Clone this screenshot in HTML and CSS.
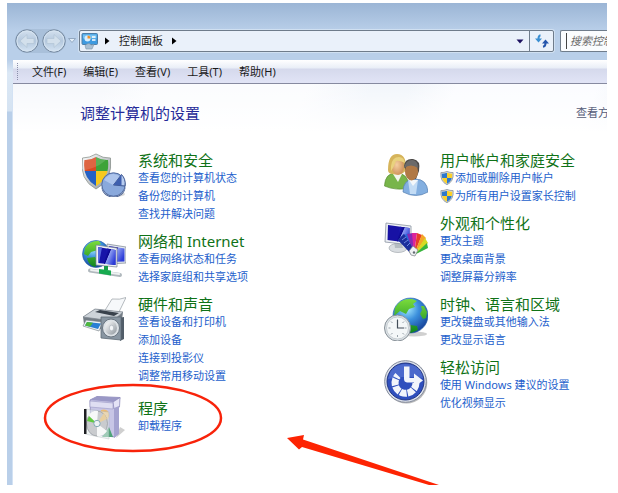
FILE: index.html
```
<!DOCTYPE html>
<html lang="zh-CN">
<head>
    <meta charset="UTF-8">
    <meta name="viewport" content="width=device-width, initial-scale=1.0">
    <title>控制面板</title>
    <link rel="stylesheet" href="styles.css">
</head>
<body>
    <!-- Shared gradients and the small shield -->
    <svg class="defs" width="0" height="0" aria-hidden="true">
        <defs>
            <linearGradient id="screen" x1="0" y1="0" x2="1" y2="0.6">
                <stop offset="0" stop-color="#2a2ad0"/>
                <stop offset="0.45" stop-color="#0c0690"/>
                <stop offset="0.5" stop-color="#8c9cf0"/>
                <stop offset="1" stop-color="#2c3cd8"/>
            </linearGradient>
            <radialGradient id="ocean" cx="0.4" cy="0.3" r="0.75">
                <stop offset="0" stop-color="#a8ecff"/>
                <stop offset="0.45" stop-color="#3b8fdc"/>
                <stop offset="1" stop-color="#123c94"/>
            </radialGradient>
            <linearGradient id="land" x1="0" y1="0" x2="0" y2="1">
                <stop offset="0" stop-color="#7bdc3c"/>
                <stop offset="1" stop-color="#0e8420"/>
            </linearGradient>
            <linearGradient id="metal" x1="0" y1="0" x2="1" y2="1">
                <stop offset="0" stop-color="#ffffff"/>
                <stop offset="1" stop-color="#8d959c"/>
            </linearGradient>
            <linearGradient id="glass" x1="0" y1="0" x2="0" y2="1">
                <stop offset="0" stop-color="#d5e2ef"/>
                <stop offset="0.5" stop-color="#b4c8de"/>
                <stop offset="1" stop-color="#d6e5f4"/>
            </linearGradient>
            <radialGradient id="skin" cx="0.4" cy="0.4" r="0.7">
                <stop offset="0" stop-color="#f5cfa2"/>
                <stop offset="1" stop-color="#c98a52"/>
            </radialGradient>
            <clipPath id="shield-clip">
                <path d="M8 2Q11 3 14 3Q14.500 11 8 14.500Q1.500 11 2 3Q5 3 8 2Z"/>
            </clipPath>
            <symbol id="uac-shield" viewBox="0 0 16 16">
                <path d="M8 0.500Q11.500 2 15 1.800Q16 12 8 15.700Q0 12 1 1.800Q4.500 2 8 0.500Z" fill="#d4d8dc" stroke="#7e868e" stroke-width="0.800"/>
                <g clip-path="url(#shield-clip)">
                    <path fill="#2d78cc" d="M0 0h8v8H0zM8 8h8v8H8z"/>
                    <path fill="#fbd029" d="M8 0h8v8H8zM0 8h8v8H0z"/>
                </g>
            </symbol>
        </defs>
    </svg>

    <div class="window">
        <header class="address-row">
            <div class="nav-buttons">
                <button type="button" class="nav-button" aria-label="后退">
                    <svg width="24" height="24" viewBox="0 0 24 24">
                        <circle cx="12" cy="12" r="11.200" fill="url(#glass)" stroke="#73879e"/>
                        <circle cx="12" cy="12" r="10" fill="none" stroke="#d6e4f1"/>
                        <path d="M5 12L12 5.500V9.500H19V14.500H12V18.500Z" fill="#d3e0ec" stroke="#b2c4d6" stroke-width="0.700"/>
                    </svg>
                </button>
                <button type="button" class="nav-button" aria-label="前进">
                    <svg width="24" height="24" viewBox="0 0 24 24">
                        <circle cx="12" cy="12" r="11.200" fill="url(#glass)" stroke="#73879e"/>
                        <circle cx="12" cy="12" r="10" fill="none" stroke="#d6e4f1"/>
                        <path d="M19 12L12 5.500V9.500H5V14.500H12V18.500Z" fill="#d3e0ec" stroke="#b2c4d6" stroke-width="0.700"/>
                    </svg>
                </button>
            </div>
            <button type="button" class="history-button" aria-label="最近的页面">
                <svg width="8" height="6" viewBox="0 0 8 6"><path d="M0.500 0.500H7.500L4 4.500Z" fill="#e3eef8" stroke="#93a9c2"/></svg>
            </button>

            <div class="address-bar">
                <svg class="address-icon" width="18" height="18" viewBox="0 0 18 18">
                    <rect x="1" y="1.500" width="15.500" height="11" rx="1" fill="#3d9ae0" stroke="#4c7ea8"/>
                    <rect x="2" y="2.500" width="13.500" height="4" fill="#73c0f2"/>
                    <circle cx="6.500" cy="6.500" r="3" fill="#d7efff"/>
                    <path d="M6.500 6.500V3.500A3 3 0 0 1 9.500 6.500Z" fill="#f0922c"/>
                    <path d="M11 5h3.500M11 8h3.500" stroke="#fff" stroke-width="1.300"/>
                    <path d="M4 13.500Q8 10 10 13L13 12.500L11 17H5Z" fill="#a9bfd2" stroke="#7a93aa" stroke-width="0.600"/>
                </svg>
                <button type="button" class="crumb-arrow" aria-label="展开">
                    <svg width="5" height="8" viewBox="0 0 5 8"><path d="M0 0.500L4.500 4L0 7.500Z"/></svg>
                </button>
                <button type="button" class="crumb">控制面板</button>
                <button type="button" class="crumb-arrow" aria-label="展开控制面板">
                    <svg width="5" height="8" viewBox="0 0 5 8"><path d="M0 0.500L4.500 4L0 7.500Z"/></svg>
                </button>
                <button type="button" class="address-drop" aria-label="以前的位置">
                    <svg width="8" height="5" viewBox="0 0 8 5"><path d="M0.500 0.500H7.500L4 4.500Z" fill="#1d1260"/></svg>
                </button>
                <button type="button" class="refresh" aria-label="刷新">
                    <svg width="14" height="14" viewBox="0 0 14 14">
                        <path d="M5.500 1.200Q3.500 1.500 3.500 5" fill="none" stroke="#3a8fd2" stroke-width="2"/>
                        <path d="M0 4.500H7L3.500 8.500Z" fill="#3a8fd2"/>
                        <path d="M8 12.800Q10.500 12.500 10.500 9" fill="none" stroke="#2455ac" stroke-width="2"/>
                        <path d="M7 9.500H14L10.500 5.500Z" fill="#2455ac"/>
                    </svg>
                </button>
            </div>

            <div class="search">
                <input type="search" class="search-input" placeholder="搜索控制面板" aria-label="搜索控制面板">
            </div>
        </header>

        <nav class="menu-bar">
            <button type="button">文件(F)</button>
            <button type="button">编辑(E)</button>
            <button type="button">查看(V)</button>
            <button type="button">工具(T)</button>
            <button type="button">帮助(H)</button>
        </nav>

        <main class="content">
            <div class="content-header">
                <h1>调整计算机的设置</h1>
                <span class="view-by">查看方式：</span>
            </div>

            <div class="categories">
                <div class="column">
                    <section class="category">
                        <svg class="category-icon" viewBox="0 0 44 44">
                            <clipPath id="big-shield"><path d="M14 4Q20 7.500 26 7Q28 25 14 33Q0 25 2.500 7Q8.500 7.500 14 4Z"/></clipPath>
                            <path d="M14 1Q21 5.500 28.500 5Q31 27 14 36Q-3 27 0.500 5Q7.500 5 14 1Z" fill="url(#metal)" stroke="#8d948f" stroke-width="0.800"/>
                            <g clip-path="url(#big-shield)">
                                <path fill="#d94a22" d="M0 0h14v18H0z"/>
                                <path fill="#3da338" d="M14 0h16v18H14z"/>
                                <path fill="#2461c4" d="M0 18h14v18H0z"/>
                                <path fill="#f6c91e" d="M14 18h16v18H14z"/>
                                <path fill="#fff" opacity="0.150" d="M0 0h28Q24 13 0 18z"/>
                            </g>
                            <ellipse cx="33" cy="41" rx="10" ry="3" fill="#999" opacity="0.400"/>
                            <path d="M19.500 32a12 11.500 0 0 0 24 0v2a12 10.500 0 0 1-24 0z" fill="#455f94"/>
                            <circle cx="31.500" cy="31.500" r="11.700" fill="#8aa9dc" stroke="#526b9f"/>
                            <path d="M22 27Q29 17 39 24L31 32Z" fill="#bdd2f2" opacity="0.700"/>
                            <path d="M31.500 32L39.500 21.500Q44 26 43 33Z" fill="#b8cdf0" stroke="#40588f"/>
                            <path d="M31.500 32L39.500 21.500V32.500Z" fill="#3e5fae"/>
                        </svg>
                        <div class="category-text">
                            <h2><a href="#">系统和安全</a></h2>
                            <ul>
                                <li><a href="#">查看您的计算机状态</a></li>
                                <li><a href="#">备份您的计算机</a></li>
                                <li><a href="#">查找并解决问题</a></li>
                            </ul>
                        </div>
                    </section>

                    <section class="category">
                        <svg class="category-icon" viewBox="0 0 44 44">
                            <circle cx="14" cy="20" r="13.500" fill="url(#ocean)" stroke="#2561a4" stroke-width="0.600"/>
                            <path d="M3 14Q8 6 17 7L19 10L14 12L16 16L9 18L6 22L2 20ZM5 24L13 23L17 28L13 33Q6 31 5 24Z" fill="url(#land)"/>
                            <path d="M25 10L44 13V29L26 30Z" fill="#e3e8ed" stroke="#78838f" stroke-width="0.700"/>
                            <path d="M27 12L42.500 14.500V27.500L27 28Z" fill="url(#screen)"/>
                            <path d="M14 11L35 14V33L14 31Z" fill="#eef1f4" stroke="#78838f" stroke-width="0.700"/>
                            <path d="M16 13L33.500 16V31L16 29Z" fill="#1714a8"/>
                            <path d="M25 14.500L33.500 16V31L22 29.800Z" fill="url(#screen)"/>
                            <path d="M16 13L20 13.500L17 29H16Z" fill="#5668dc"/>
                            <path d="M22 32h4v4h-4z" fill="#199c48"/>
                            <path d="M8 36.500L38 41" stroke="#b0b8bd" stroke-width="4" stroke-linecap="round"/>
                            <path d="M9 36L37 40" stroke="#edf1f1" stroke-width="2" stroke-linecap="round"/>
                            <path d="M17 35L29 36.500V41.500L17 39.500Z" fill="#18aa50"/>
                        </svg>
                        <div class="category-text">
                            <h2><a href="#">网络和 Internet</a></h2>
                            <ul>
                                <li><a href="#">查看网络状态和任务</a></li>
                                <li><a href="#">选择家庭组和共享选项</a></li>
                            </ul>
                        </div>
                    </section>

                    <section class="category">
                        <svg class="category-icon" viewBox="0 0 44 44">
                            <path d="M22 15L30 2Q38 3 44 0.500L36 17Z" fill="#f6f8fa" stroke="#a3a9af" stroke-width="0.800"/>
                            <path d="M1 20L13 12L41 15L39 30L25 34L2 27Z" fill="#747d86"/>
                            <path d="M1 20L13 12L41 15L31 24Z" fill="#cdd3d9" stroke="#7c858e" stroke-width="0.700"/>
                            <path d="M13 15L18 13L37 16L32 19Z" fill="#39424c"/>
                            <path d="M4 23L21 25L17 34L1 29Z" fill="#eef2f5" stroke="#717a82" stroke-width="0.600"/>
                            <path d="M5 25L19 26.500L16 32L3 28.500Z" fill="#2a7fd4"/>
                            <path d="M5 25L11 25.700L8 29.700L3 28.500Z" fill="#51b93a"/>
                            <path d="M36 21L42 20V42L38 44Z" fill="#515d69"/>
                            <path d="M19 20H39V43L19 41Z" fill="#8996a2" stroke="#5d6974" stroke-width="0.800"/>
                            <ellipse cx="29" cy="31" rx="8.500" ry="9" fill="#dce1e5" stroke="#6b7681"/>
                            <ellipse cx="29" cy="31" rx="6" ry="6.800" fill="url(#metal)"/>
                            <ellipse cx="29.500" cy="31" rx="2.200" ry="2.800" fill="#f4f6f8" stroke="#a5adb4" stroke-width="0.600"/>
                        </svg>
                        <div class="category-text">
                            <h2><a href="#">硬件和声音</a></h2>
                            <ul>
                                <li><a href="#">查看设备和打印机</a></li>
                                <li><a href="#">添加设备</a></li>
                                <li><a href="#">连接到投影仪</a></li>
                                <li><a href="#">调整常用移动设置</a></li>
                            </ul>
                        </div>
                    </section>

                    <section class="category marked">
                        <svg class="category-icon" viewBox="0 0 44 44">
                            <path d="M34 42L43 34L38 31Z" fill="#888" opacity="0.400"/>
                            <path d="M8 4L15 0.500L38 1.500L36 9L33 41L9 38Z" fill="#c8c6e6" stroke="#8582b4" stroke-width="0.800"/>
                            <path d="M8 4L31 6L38 1.500L15 0.500Z" fill="#9a98c6"/>
                            <path d="M31 6L38 1.500L37.500 11L32 13Z" fill="#e4e3f6" stroke="#8582b4" stroke-width="0.700"/>
                            <path d="M32 12L37 10V38L32 42Z" fill="#a5a3d0"/>
                            <path d="M8 5L31 7V13L8 11Z" fill="#dfdef2" stroke="#9a98c4" stroke-width="0.600"/>
                            <path d="M19 14Q27 12 27 20L25 25L19 22Z" fill="#f0bd72"/>
                            <path d="M20 41L27 31L31 41Z" fill="#4da477"/>
                            <path d="M3 13L27 16V43L3 38Z" fill="#e2ecec" opacity="0.550" stroke="#a0a8ac" stroke-width="0.600"/>
                            <ellipse cx="15" cy="27.500" rx="10.500" ry="12.500" fill="#c9cbce" stroke="#95999d" stroke-width="0.700"/>
                            <path d="M15 27.500L6 20Q10 14 16 15ZM15 27.500L25 35Q21 41 15 40Z" fill="#f7f8f8"/>
                            <path d="M15 27.500L5 25L7 20Z" fill="#62ca42"/>
                            <path d="M15 27.500L22 17L25 23Z" fill="#e8cfa0"/>
                            <circle cx="15" cy="27.500" r="3.200" fill="#eef2f4" stroke="#83a9b4"/>
                            <path d="M2 13H4.500V38H2Z" fill="#1e1f22"/>
                        </svg>
                        <div class="category-text">
                            <h2><a href="#">程序</a></h2>
                            <ul>
                                <li><a href="#">卸载程序</a></li>
                            </ul>
                        </div>
                        <svg class="mark-ellipse" width="180" height="70" viewBox="0 0 180 70" aria-hidden="true">
                            <ellipse cx="90" cy="35" rx="88" ry="33" fill="none" stroke="#f8230a" stroke-width="2.500"/>
                        </svg>
                    </section>
                </div>

                <div class="column">
                    <section class="category">
                        <svg class="category-icon" viewBox="0 0 44 44">
                            <path d="M0.500 33Q1 20 12 20Q25 20 25 35Q12 38 0.500 33Z" fill="#78b54a" stroke="#5b8f38" stroke-width="0.700"/>
                            <path d="M9 21L14 29L18 21Z" fill="#f2f5ec"/>
                            <path d="M4 17Q4 1 13 1Q23 1 22 17Q18 23 9 21Q4 21 4 17Z" fill="#d6b45b"/>
                            <ellipse cx="14" cy="13.500" rx="6" ry="8.500" fill="url(#skin)"/>
                            <path d="M7 13Q8 4 15 4Q20 4 21 10Q15 7 12 8Q10 14 7 18Z" fill="#e9d27e"/>
                            <path d="M19 39Q19 26 31 26Q43 26 44 39Q32 46 19 39Z" fill="#83afe0" stroke="#577fb0" stroke-width="0.700"/>
                            <path d="M24 27Q28 29 34 27L32 41H26Z" fill="#c3dcf5"/>
                            <path d="M25 27L29 33L34 27Z" fill="#f4f7fa"/>
                            <path d="M20 13Q21 5 29 6Q37 7 35 18L32 26H25Z" fill="#4d4a48"/>
                            <ellipse cx="27.500" cy="18.500" rx="6.500" ry="9" fill="#b07946"/>
                            <path d="M20 15Q22 6 29 7Q34 8 34 15Q27 10 20 15Z" fill="#6b6a6a"/>
                        </svg>
                        <div class="category-text">
                            <h2><a href="#">用户帐户和家庭安全</a></h2>
                            <ul>
                                <li><a href="#"><svg class="shield"><use href="#uac-shield"/></svg>添加或删除用户帐户</a></li>
                                <li><a href="#"><svg class="shield"><use href="#uac-shield"/></svg>为所有用户设置家长控制</a></li>
                            </ul>
                        </div>
                    </section>

                    <section class="category">
                        <svg class="category-icon" viewBox="0 0 44 44">
                            <ellipse cx="14" cy="32" rx="9" ry="4.500" fill="#d9dde1" stroke="#a3a9af" stroke-width="0.700"/>
                            <path d="M10 25H17L19 32H11Z" fill="#b5bcc2"/>
                            <path d="M2 7L27 10V29L1 26Z" fill="#edf0f4" stroke="#8992a0" stroke-width="0.800"/>
                            <path d="M4 9L25.500 12V27L3.500 24Z" fill="#1711a4"/>
                            <path d="M16 10.700L25.500 12V27L13 25.300Z" fill="url(#screen)"/>
                            <path d="M30 39L14 24L20 18Z" fill="#223ca8"/>
                            <path d="M30 39L18 20L25 17Z" fill="#2a68d8"/>
                            <path d="M30 39L23 18L29 17Z" fill="#8828b4"/>
                            <path d="M30 39L28 17L33 17Z" fill="#dc2499"/>
                            <path d="M30 39L33 17L38 19Z" fill="#e83c2c"/>
                            <path d="M30 39L38 18L42 22Z" fill="#f3a528"/>
                            <path d="M30 39L41 22L44 27Z" fill="#d5da24"/>
                            <path d="M30 39L43 27L44 32Z" fill="#38b53c"/>
                            <path d="M14 24L20 18L27 29L31 38L28 39Z" fill="#1b2e9c"/>
                            <path d="M18 24L22 21M20 27L24 24M23 30L26 27" stroke="#6f8ae0"/>
                            <path d="M25 35L29 30L34 34L31 40L27 39Z" fill="#f0f2f4" stroke="#7a8087" stroke-width="0.700"/>
                            <circle cx="30" cy="36.500" r="1.200" fill="#646b72"/>
                        </svg>
                        <div class="category-text">
                            <h2><a href="#">外观和个性化</a></h2>
                            <ul>
                                <li><a href="#">更改主题</a></li>
                                <li><a href="#">更改桌面背景</a></li>
                                <li><a href="#">调整屏幕分辨率</a></li>
                            </ul>
                        </div>
                    </section>

                    <section class="category">
                        <svg class="category-icon" viewBox="0 0 44 44">
                            <ellipse cx="30" cy="37" rx="13" ry="2.500" fill="#777" opacity="0.350"/>
                            <circle cx="26.500" cy="18.500" r="17.500" fill="url(#ocean)" stroke="#2a62a6" stroke-width="0.600"/>
                            <path d="M11 11Q16 1 28 2L33 4L29 7L31 10L25 12L22 17L16 14L10 19ZM37 9L40 9L43 15L42 21L39 22L36 17L38 13ZM26 28L33 29L34 33L27 36L23 33Z" fill="url(#land)"/>
                            <circle cx="13.500" cy="31" r="13" fill="#dce2e6" stroke="#889198"/>
                            <circle cx="13.500" cy="31" r="11" fill="#f4f7f8" stroke="#bcc4c9" stroke-width="0.800"/>
                            <path d="M13.500 22v2M13.500 38v2M4.500 31h2M20.500 31h2M7 24.500l1.500 1.500M20 24.500l-1.500 1.500M7 37.500l1.500-1.500M20 37.500l-1.500-1.500" stroke="#97a1a9"/>
                            <path d="M13.500 23V31H20" fill="none" stroke="#424d58" stroke-width="1.200"/>
                        </svg>
                        <div class="category-text">
                            <h2><a href="#">时钟、语言和区域</a></h2>
                            <ul>
                                <li><a href="#">更改键盘或其他输入法</a></li>
                                <li><a href="#">更改显示语言</a></li>
                            </ul>
                        </div>
                    </section>

                    <section class="category">
                        <svg class="category-icon" viewBox="0 0 44 44">
                            <circle cx="22.500" cy="22.800" r="20.800" fill="#777" opacity="0.500"/>
                            <circle cx="21.500" cy="21.500" r="20.800" fill="#dce1ea" stroke="#848b9c"/>
                            <circle cx="21.500" cy="21.500" r="18.500" fill="#2f4fbd" stroke="#203482"/>
                            <path d="M4 19Q7 4 22 4Q37 5 39 18Q23 15 4 19Z" fill="#7690e4" opacity="0.400"/>
                            <path d="M32 23A10.500 10.500 0 1 1 14 15.500" fill="none" stroke="#f2f5fb" stroke-width="7" stroke-dasharray="6.500 1"/>
                            <path d="M20 6.500H25.500V18H30V13.500L39 20.500L30 27V22.500H23Q20 22 20 19Z" fill="#f2f5fb"/>
                        </svg>
                        <div class="category-text">
                            <h2><a href="#">轻松访问</a></h2>
                            <ul>
                                <li><a href="#">使用 Windows 建议的设置</a></li>
                                <li><a href="#">优化视频显示</a></li>
                            </ul>
                        </div>
                    </section>
                </div>
            </div>

            <svg class="mark-arrow" width="156" height="50" viewBox="0 0 156 50" aria-hidden="true">
                <path d="M0 3L17 0L16 4.500L152 50H142L15 12L12 14.500Z" fill="#fd2403"/>
            </svg>
        </main>
    </div>
</body>
</html>
```
FILE: styles.css
```
* {
    box-sizing: border-box;
}

body {
    display: flex;
    min-height: 100vh;
    margin: 0;
    padding: 3px 11px 8px 7px;
    background-color: #fff;
    color: #1a1a1a;
    font-family: "Noto Sans", "Noto Sans CJK SC", sans-serif;
    font-size: 11px;
    line-height: 18px;
}

button {
    padding: 0;
    border: none;
    background: none;
    color: inherit;
    font: inherit;
    cursor: pointer;
}

svg {
    display: block;
}

h1,
h2,
ul {
    margin: 0;
    padding: 0;
    font-weight: normal;
    list-style: none;
}

a {
    color: inherit;
    text-decoration: none;
}

a:hover {
    text-decoration: underline;
}

.defs {
    position: absolute;
}

.window {
    display: flex;
    flex: 1;
    flex-direction: column;
    min-width: 0;
    overflow: hidden;
    background: linear-gradient(#9bb5d5, #b9cfe9 28px, #b9cfe9 57px, #dce8f5 70px, #d5e3f2 108px, #b9cfe9 109px);
}

/* Address row */
.address-row {
    display: flex;
    align-items: center;
    padding: 26px 0 7px 8px;
}

.nav-buttons {
    display: flex;
    gap: 3px;
    border-radius: 12px;
    background-color: #a9c0da;
}

.history-button {
    width: 8px;
    margin: 0 3px 0 2px;
}

.address-bar {
    display: flex;
    flex: 1;
    align-items: center;
    height: 22px;
    min-width: 0;
    border: 1px solid #6f7c8b;
    border-radius: 2px;
    background-color: #eaf1fa;
    box-shadow: 0 0 0 1px #d0e0f1;
}

.address-icon {
    margin-left: 1px;
}

.crumb-arrow {
    padding: 0 5px 0 6px;
}

.crumb {
    padding: 0 3px 0 4px;
    white-space: nowrap;
}

.address-drop {
    margin-left: auto;
    padding: 0 5px;
}

.refresh {
    display: flex;
    align-items: center;
    justify-content: center;
    width: 24px;
    height: 20px;
    border-left: 1px solid #6f7c8b;
}

.search {
    flex: 0 0 47px;
    height: 22px;
    margin-left: 6px;
    overflow: hidden;
    border: 1px solid #6f7c8b;
    border-right: none;
    border-radius: 2px 0 0 2px;
    background-color: #fafcfe;
    padding: 2px 0 2px 5px;
}

.search-input {
    display: block;
    width: 160px;
    height: 16px;
    padding: 0 0 0 3px;
    border: none;
    border-left: 1px solid #444;
    outline: none;
    background: none;
    font: inherit;
}

.search-input::placeholder {
    color: #6b6b6b;
    font-style: italic;
}

/* Menu bar */
.menu-bar {
    display: flex;
    gap: 17px;
    height: 24px;
    margin-left: 6px;
    padding: 0 18px;
    border-bottom: 1px solid #868aa0;
    background: linear-gradient(#fff, #e9eef7 8px, #d5d9ec 9px, #e1e4f6);
}

.menu-bar::before {
    width: 1px;
    margin: 3px -4px 3px -14px;
    border-left: 1px dotted #8a8faa;
    content: "";
}

.menu-bar button {
    white-space: nowrap;
}

/* Content */
.content {
    position: relative;
    flex: 1;
    margin-left: 5px;
    padding-top: 20px;
    overflow: hidden;
    border-left: 1px solid #d3e2f4;
    background:
        linear-gradient(rgba(255, 255, 255, 0), #fff 48px),
        linear-gradient(115deg, #f6f8fc 0 12%, #fbfcfe 18% 38%, #f2f6fb 46% 51%, #fbfcff 57% 75%, #edf2f9 82% 100%);
}

.content-header {
    display: flex;
    align-items: center;
    justify-content: space-between;
    padding-left: 67px;
}

h1 {
    color: #262b99;
    font-size: 15px;
    line-height: 18px;
}

.view-by {
    flex: 0 0 31px;
    overflow: hidden;
    color: #555c78;
    white-space: nowrap;
}

.categories {
    display: grid;
    grid-template-columns: 23fr 17fr;
    padding: 29px 0 12px 69px;
}

.column {
    display: flex;
    flex-direction: column;
    gap: 9px;
    min-width: 0;
}

.category {
    display: flex;
    gap: 12px;
}

.category-icon {
    flex: none;
    width: 44px;
    height: 44px;
    margin-top: 2px;
}

.category-text {
    align-self: center;
    white-space: nowrap;
}

h2 {
    color: #0f7217;
    font-size: 15px;
    line-height: 18px;
}

li {
    display: flex;
}

li a {
    display: flex;
    align-items: center;
    gap: 1px;
    color: #2360cc;
}

.shield {
    width: 14px;
    height: 14px;
}

/* Red marks drawn over the panel */
.marked {
    position: relative;
}

.mark-ellipse {
    position: absolute;
    top: -11px;
    left: -39px;
    pointer-events: none;
}

.mark-arrow {
    position: absolute;
    bottom: 0;
    left: 274px;
    pointer-events: none;
}
```
